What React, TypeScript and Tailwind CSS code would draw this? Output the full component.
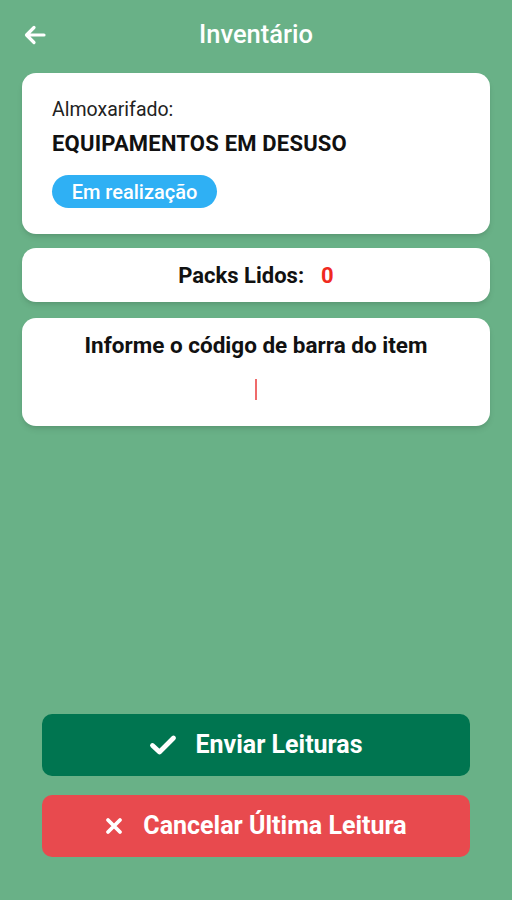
import React from "react";

export default function App() {
  return (
    <div
      className="w-[512px] h-[900px] bg-[#69b187] flex flex-col"
      style={{ fontFamily: "Roboto, 'Noto Sans', sans-serif" }}
    >
      <div className="relative h-[70px] flex items-center justify-center">
        <svg
          className="absolute left-[24px] top-[25px]"
          width="22"
          height="20"
          viewBox="0 0 22 20"
          fill="none"
          stroke="white"
          strokeWidth="3.2"
          strokeLinecap="round"
          strokeLinejoin="round"
        >
          <path d="M20 10H3M10 2.5L2.5 10L10 17.5" />
        </svg>
        <span className="text-white text-[25.5px] font-medium leading-none">Inventário</span>
      </div>

      <div className="mx-[22px] mt-[3px] bg-white rounded-[14px] shadow-md h-[161px] pl-[30px] pt-[24px]">
        <div className="text-[19.5px] text-[#222] leading-[26px]">Almoxarifado:</div>
        <div className="text-[22px] font-bold text-[#111] leading-[28px] mt-[7px] tracking-[0.2px]">
          EQUIPAMENTOS EM DESUSO
        </div>
        <div className="mt-[17px] inline-flex items-center justify-center h-[33px] w-[165px] rounded-full bg-[#2fb0f4] text-white text-[20px] font-medium">
          Em realização
        </div>
      </div>

      <div className="mx-[22px] mt-[14px] bg-white rounded-[14px] shadow-md h-[54px] flex items-center justify-center">
        <span className="text-[22px] font-bold text-[#111]">Packs Lidos:</span>
        <span className="text-[22px] font-bold text-[#f02a1f] ml-[17px]">0</span>
      </div>

      <div className="mx-[22px] mt-[16px] bg-white rounded-[14px] shadow-md h-[108px] flex flex-col items-center pt-[12px]">
        <span className="text-[22.5px] font-bold text-[#111] leading-[30px]">
          Informe o código de barra do item
        </span>
        <div className="mt-[19px] w-[2px] h-[21px] bg-[#ef6b6b]" />
      </div>

      <div className="flex-1" />

      <div className="mx-[42px] flex flex-col gap-[19px] mb-[43px]">
        <button className="h-[62px] rounded-[10px] bg-[#007550] flex items-center justify-center text-white text-[25px] font-bold">
          <svg width="28" height="22" viewBox="0 0 28 22" fill="none" stroke="white" strokeWidth="4.8" strokeLinecap="round" strokeLinejoin="round">
            <path d="M3.5 11.5L10.5 18L24.5 4" />
          </svg>
          <span className="ml-[18px]">Enviar Leituras</span>
        </button>
        <button className="h-[62px] rounded-[10px] bg-[#e84a4e] flex items-center justify-center text-white text-[25px] font-bold">
          <svg width="18" height="18" viewBox="0 0 18 18" fill="none" stroke="white" strokeWidth="3.8" strokeLinecap="round">
            <path d="M3 3L15 15M15 3L3 15" />
          </svg>
          <span className="ml-[20px]">Cancelar Última Leitura</span>
        </button>
      </div>
    </div>
  );
}
